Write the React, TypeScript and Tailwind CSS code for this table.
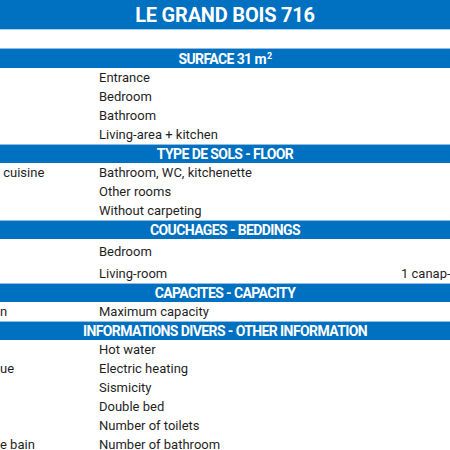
import React from 'react';

type Row =
  | { kind: 'bar'; label: React.ReactNode; h: string }
  | { kind: 'row'; left?: string; mid?: string; right?: string; h: string };

const rows: Row[] = [
  { kind: 'row', h: 'h-[18px]' },
  { kind: 'bar', label: <>SURFACE 31 m<sup className="text-[9px] relative -top-[5px] ml-[1px]">2</sup></>, h: 'h-[20px]' },
  { kind: 'row', mid: 'Entrance', h: 'h-[19px]' },
  { kind: 'row', mid: 'Bedroom', h: 'h-[19px]' },
  { kind: 'row', mid: 'Bathroom', h: 'h-[19px]' },
  { kind: 'row', mid: 'Living-area + kitchen', h: 'h-[19px]' },
  { kind: 'bar', label: 'TYPE DE SOLS - FLOOR', h: 'h-[19px]' },
  { kind: 'row', left: ' cuisine', mid: 'Bathroom, WC, kitchenette', h: 'h-[19px]' },
  { kind: 'row', mid: 'Other rooms', h: 'h-[19px]' },
  { kind: 'row', mid: 'Without carpeting', h: 'h-[19px]' },
  { kind: 'bar', label: 'COUCHAGES - BEDDINGS', h: 'h-[19px]' },
  { kind: 'row', mid: 'Bedroom', h: 'h-[24px]' },
  { kind: 'row', mid: 'Living-room', right: '1 canap-lit', h: 'h-[20px]' },
  { kind: 'bar', label: 'CAPACITES - CAPACITY', h: 'h-[19px]' },
  { kind: 'row', left: 'n', mid: 'Maximum capacity', h: 'h-[19px]' },
  { kind: 'bar', label: 'INFORMATIONS DIVERS - OTHER INFORMATION', h: 'h-[19px]' },
  { kind: 'row', mid: 'Hot water', h: 'h-[19px]' },
  { kind: 'row', left: 'ue', mid: 'Electric heating', h: 'h-[19px]' },
  { kind: 'row', mid: 'Sismicity', h: 'h-[19px]' },
  { kind: 'row', mid: 'Double bed', right: '                                              2', h: 'h-[19px]' },
  { kind: 'row', mid: 'Number of toilets', h: 'h-[19px]' },
  { kind: 'row', left: 'e bain', mid: 'Number of bathroom', h: 'h-[19px]' },
];

const App = () => {
  return (
    <div className="w-[450px] h-[450px] overflow-hidden bg-white font-['Roboto',sans-serif] text-[#1f1f1f]">
      {/* Title */}
      <div className="h-[30px] bg-[#0070c0] border-b border-[#a9cdea] flex items-center justify-center">
        <span className="text-white font-bold text-[20px] tracking-[-0.2px] leading-none">LE GRAND BOIS 716</span>
      </div>

      {rows.map((r, i) =>
        r.kind === 'bar' ? (
          <div
            key={i}
            className={`${r.h} bg-[#0070c0] border-t border-[#8fbde3] flex items-center justify-center`}
          >
            <span className="text-white font-bold text-[14px] tracking-[-0.6px] leading-none">{r.label}</span>
          </div>
        ) : (
          <div key={i} className={`${r.h} grid grid-cols-[99px_302px_49px] items-center text-[13px] leading-none`}>
            <span className="whitespace-pre overflow-hidden">{r.left}</span>
            <span className="whitespace-nowrap">{r.mid}</span>
            <span className="whitespace-pre overflow-hidden">{r.right}</span>
          </div>
        )
      )}
    </div>
  );
};

export default App;
